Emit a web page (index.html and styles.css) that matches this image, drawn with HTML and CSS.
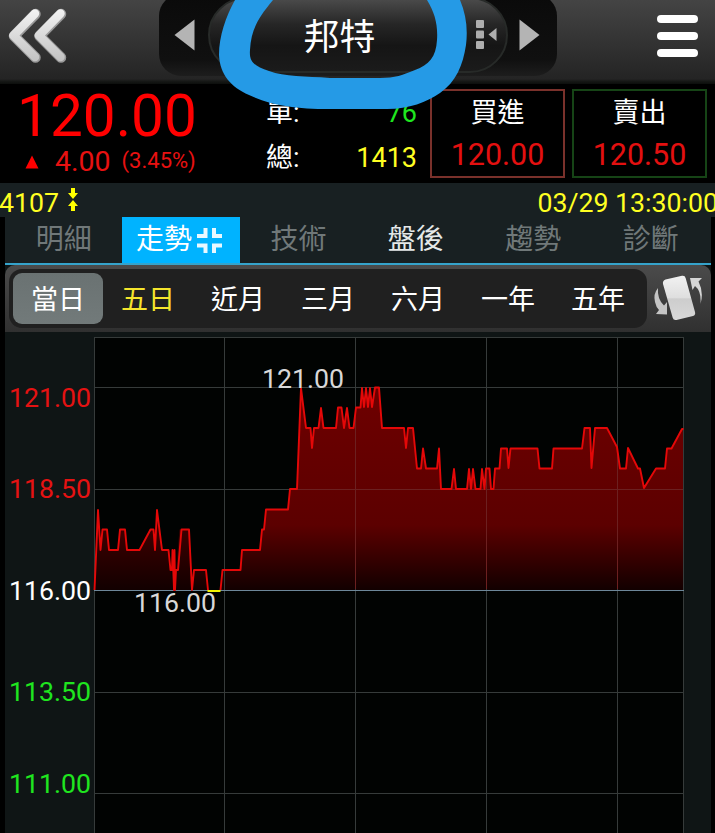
FILE: index.html
```html
<!DOCTYPE html>
<html lang="zh-Hant">
<head>
    <meta charset="UTF-8">
    <meta name="viewport" content="width=device-width, initial-scale=1.0">
    <title>邦特 4107</title>
    <link rel="stylesheet" href="styles.css">
</head>
<body>
    <header class="top-bar">
        <svg class="back-icon" width="60" height="56" viewBox="0 0 60 56">
            <defs>
                <linearGradient id="silver" gradientUnits="userSpaceOnUse" x1="0" y1="0" x2="0" y2="56">
                    <stop offset="0" stop-color="#f4f4f4"/>
                    <stop offset="1" stop-color="#c0c0c0"/>
                </linearGradient>
            </defs>
            <g fill="none" stroke-width="10.500" stroke-linecap="round" stroke-linejoin="round">
                <path stroke="#999" d="M27.500 6L6 28l21.500 21.500M53 6L31.500 28L53 49.500"/>
                <path stroke="url(#silver)" stroke-width="8.500" d="M27 5.500L5.500 27.500l21.500 21.500M52.500 5.500L31 27.500l21.500 21.500"/>
            </g>
        </svg>

        <div class="switcher">
            <svg width="21" height="32" viewBox="0 0 21 32"><path d="M20.500 .5v31L.5 16z" fill="#b4b4b4"/></svg>
            <div class="stock-name">
                <span>邦特</span>
                <svg class="list-icon" width="21" height="30" viewBox="0 0 21 30" fill="#adadad">
                    <rect x="0" y="0" width="8" height="8" rx="1"/>
                    <rect x="0" y="10.500" width="8" height="8" rx="1"/>
                    <rect x="0" y="21" width="8" height="8" rx="1"/>
                    <path d="M20.500 8v13L12.500 14.500z"/>
                </svg>
            </div>
            <svg width="21" height="32" viewBox="0 0 21 32"><path d="M.5 .5v31L20.500 16z" fill="#b4b4b4"/></svg>
        </div>

        <div class="menu-icon"><i></i><i></i><i></i></div>
    </header>

    <section class="quote">
        <div class="price">
            <div class="last">120.00</div>
            <div class="change">
                <svg width="14" height="14" viewBox="0 0 14 14"><path d="M7 .5L13.500 13.500H.5z" fill="#f00"/></svg>
                <span class="diff">4.00</span>
                <span class="percent">(3.45%)</span>
            </div>
        </div>
        <div class="volume">
            <div class="volume-row"><span>單:</span><span class="green">76</span></div>
            <div class="volume-row"><span>總:</span><span class="yellow">1413</span></div>
        </div>
        <div class="offer buy">
            <span>買進</span>
            <span class="offer-price">120.00</span>
        </div>
        <div class="offer sell">
            <span>賣出</span>
            <span class="offer-price">120.50</span>
        </div>
    </section>

    <div class="info-bar">
        <span>4107</span>
        <svg width="10" height="24" viewBox="0 0 10 24" fill="#ff0">
            <path d="M3 0h4v5h3L5 11 0 5h3zM3 23h4v-5h3L5 12 0 18h3z"/>
        </svg>
        <span class="time">03/29 13:30:00</span>
    </div>

    <main class="panel">
        <nav class="tabs">
            <div class="tab">明細</div>
            <div class="tab active">走勢
                <svg width="25" height="25" viewBox="0 0 25 25" fill="none" stroke="#e8f8ff" stroke-width="4">
                    <path d="M8.500 0v8H0M17 0v8h8M0 17.500h8.500V25M25 17.500h-8V25"/>
                </svg>
            </div>
            <div class="tab">技術</div>
            <div class="tab enabled">盤後</div>
            <div class="tab">趨勢</div>
            <div class="tab">診斷</div>
        </nav>

        <div class="range-bar">
            <div class="ranges">
                <div class="range selected">當日</div>
                <div class="range yellow">五日</div>
                <div class="range">近月</div>
                <div class="range">三月</div>
                <div class="range">六月</div>
                <div class="range">一年</div>
                <div class="range">五年</div>
            </div>
            <svg class="rotate-icon" width="50" height="48" viewBox="0 0 50 48">
                <defs>
                    <linearGradient id="card" x1="0" y1="0" x2="0" y2="1">
                        <stop offset="0" stop-color="#f2f2f2"/>
                        <stop offset=".5" stop-color="#dedede"/>
                        <stop offset=".52" stop-color="#cdcdcd"/>
                        <stop offset="1" stop-color="#d8d8d8"/>
                    </linearGradient>
                </defs>
                <path d="M12.500 4.500L29 .8q3-.5 3.700 2.400L42 37q.8 3-2 4l-16.500 4q-3 .6-3.800-2.300L10 9q-.6-3.500 2.500-4.500z" fill="url(#card)"/>
                <path d="M5 13Q0 19 2 27q1 5 4 8l-3 4 11 .5V27l-3 3.500Q4 24 5 13z" fill="#c4c4c4"/>
                <path d="M37 3h12l-3.500 3.500Q51 17 47.500 29q1-13-5.500-18l-2.500 4z" fill="#d6d6d6"/>
            </svg>
        </div>

        <svg class="chart" width="706" height="501" viewBox="5 332 706 501">
            <defs>
                <linearGradient id="area" gradientUnits="userSpaceOnUse" x1="0" y1="387" x2="0" y2="590">
                    <stop offset="0" stop-color="#6e0000"/>
                    <stop offset=".68" stop-color="#5c0000"/>
                    <stop offset="1" stop-color="#120000"/>
                </linearGradient>
                <linearGradient id="area-left" gradientUnits="userSpaceOnUse" x1="0" y1="509" x2="0" y2="590">
                    <stop offset="0" stop-color="#4c0000"/>
                    <stop offset="1" stop-color="#120000"/>
                </linearGradient>
            </defs>
            <rect x="94" y="337" width="590" height="496" fill="#010302"/>

            <!-- filled area under the price line -->
            <path fill="url(#area-left)" d="M94.500 590L98 510l2.500 40 2-20.500h4.500l2 20.500h9l2-20.500h5l2 20.500h12.500l11-20.500h3l1.500 20.500 2-40 5 40h7l2 20 2 20 3-20 3.500-40.500H189l3 60.500z"/>
            <path fill="url(#area)" d="M192 590l2-20h12l2 20h12.500l2-20h18l1.500-20h18l2-20.500h2l2-20h22l2-20.500h7L301 388l5 40h4.500l1.500 20 2-20h4.500l2.500-20 2.500 20H336l2-20.500h3.500L344 428l3-20 2.500 20h4l2.500-20.500h4.500L362 388l2 19 2-19 2 19 2-19 2 19 3-19.500h4L382 428h22l2 20 2-20h5l4 40.500h4l2-20 3 20h11l2-20 2 40.500h10.500l2.500-20 2 20h11l2-20 2 20 2-20 2.500 20h5l1.500-20 2.500 20 1.500-20.500h3.500l1.500 20.500h2.500l1.500-20.500h4.500l1.500-20h6l1.500 19.500 2-19.500h27l2 20H552l1.500-20H582l2.500-20.500h5.500l1.500 40 3.500-40h12l10 19 3 21.500h6l2-20.500 10 20.500h2l4 19.500 12-19.500h9l2-20h4.500L682 429h1.500v161z"/>

            <g stroke="#363b3a">
                <path d="M94.500 337v496M224.500 337v496M355.500 337v496M486.500 337v496M617.500 337v496M683.500 337v496M94 337.500h590M94 387.500h590M94 692.500h590M94 793.500h590" fill="none"/>
                <path d="M94 489.500h201"/>
            </g>
            <g stroke="#6c2020" fill="none">
                <path d="M355.500 410v179M486.500 470v119M617.500 449v140"/>
                <path d="M297 489.500h386"/>
            </g>
            <path d="M94 590.500h590" stroke="#6d8799" fill="none"/>

            <path fill="none" stroke="#e40808" stroke-width="1.900" stroke-linejoin="round" d="M94.500 590L98 510l2.500 40 2-20.500h4.500l2 20.500h9l2-20.500h5l2 20.500h12.500l11-20.500h3l1.500 20.500 2-40 5 40h6.500l2 20h1.500l.5-20 1.500 40 .5-40 .5 40 1-20h2l3.500-40.500H189l3 60.500 2-20h12l2 20M220.500 590l2-20h18l1.500-20h18l2-20.500h2l2-20h22l2-20.500h7L301 388l5 40h4.500l1.500 20 2-20h4.500l2.500-20 2.500 20H336l2-20.500h3.500L344 428l3-20 2.500 20h4l2.500-20.500h4.500L362 388l2 19 2-19 2 19 2-19 2 19 3-19.500h4L382 428h22l2 20 2-20h5l4 40.500h4l2-20 3 20h11l2-20 2 40.500h10.500l2.500-20 2 20h11l2-20 2 20 2-20 2.500 20h5l1.500-20 2.500 20 1.500-20.500h3.500l1.500 20.500h2.500l1.500-20.500h4.500l1.500-20h6l1.500 19.500 2-19.500h27l2 20H552l1.500-20H582l2.500-20.500h5.500l1.500 40 3.500-40h12l10 19 3 21.500h6l2-20.500 10 20.500h2l4 19.500 12-19.500h9l2-20h4.500L682 429h1.500"/>
            <path d="M207.500 591H220.500" stroke="#f2f200" stroke-width="2"/>

            <g class="axis" text-anchor="end">
                <text class="up" x="91" y="407">121.00</text>
                <text class="up" x="91" y="498">118.50</text>
                <text class="flat" x="91" y="600">116.00</text>
                <text class="down" x="91" y="701">113.50</text>
                <text class="down" x="91" y="793">111.00</text>
            </g>
            <g class="axis mark">
                <text x="262" y="388">121.00</text>
                <text x="134" y="612">116.00</text>
            </g>
        </svg>
    </main>

    <!-- hand-drawn highlight around the stock name -->
    <svg class="highlight" width="260" height="112" viewBox="215 0 260 112">
        <path fill="#259ae6" d="M235 0C226 16 219 36 219 55c1 20 12 32 30 40 22 10 45 14 81 14h57c22 0 40-7 53-16 16-11 23-28 26-48 2-16 0-31-6-45h-33c8 13 11 25 10 40-1 17-8 25-22 30-12 5-20 8-35 8h-50c-25-2-45-1-61-7-15-5-20-9-19-21 1-20 8-32 23-50z"/>
    </svg>
</body>
</html>
```

FILE: styles.css
```css
* {
    box-sizing: border-box;
}

body {
    margin: 0;
    height: 833px;
    overflow: hidden;
    background-color: #000;
    color: #fff;
    font-family: Roboto, "Noto Sans CJK TC", sans-serif;
    font-size: 27px;
    position: relative;
}

.green {
    color: #1fe61f;
}

.yellow {
    color: #ff2;
}

/* top bar */
.top-bar {
    display: flex;
    justify-content: space-between;
    height: 84px;
    padding: 0 17px 0 8px;
    overflow: hidden;
    background: linear-gradient(#444, #242424 94%, #151715 97%, #0c0e0c);
}

.back-icon {
    margin-top: 8px;
}

.switcher {
    display: flex;
    align-items: center;
    justify-content: space-between;
    width: 398px;
    height: 82px;
    margin-top: -6px;
    margin-left: 74px;
    margin-right: 83px;
    padding: 0 17px 0 15px;
    border-radius: 22px;
    background: linear-gradient(#0a0a0a, #101010 80%, #1d1d1d);
}

.stock-name {
    display: flex;
    align-items: center;
    justify-content: flex-end;
    width: 300px;
    height: 76px;
    margin: 0 0 0 1px;
    padding-right: 9px;
    border-radius: 38px;
    border: 2px solid #272a28;
    background: linear-gradient(#4b4b4b, #262626 35%, #151515 65%, #1b1b1b);
    font-size: 36px;
}

.stock-name span {
    margin: -2px 100px 0 0;
}

.menu-icon {
    display: flex;
    flex-direction: column;
    gap: 9px;
    padding-top: 15px;
}

.menu-icon i {
    width: 41px;
    height: 8px;
    border-radius: 4px;
    background-color: #fff;
}

/* quote */
.quote {
    display: flex;
    height: 99px;
    padding-right: 8px;
    line-height: 1;
}

.price {
    width: 266px;
    color: #f00;
}

.last {
    padding: 7px 0 5px 17px;
    font-size: 58.5px;
    line-height: 50px;
}

.change {
    display: flex;
    align-items: center;
    height: 32px;
    padding-left: 25px;
    color: #e81111;
}

.diff {
    margin-left: 16px;
    font-size: 28.5px;
    line-height: 26px;
}

.percent {
    margin: -2px 0 0 11px;
    font-size: 22px;
}

.volume {
    width: 151px;
    padding-top: 7px;
}

.volume-row {
    display: flex;
    align-items: center;
    justify-content: space-between;
    height: 45px;
}

.offer {
    display: flex;
    flex-direction: column;
    align-items: center;
    width: 135px;
    height: 89px;
    margin: 5px 0 0 13px;
    padding-top: 9px;
    border: 2px solid #7a312b;
}

.offer.sell {
    margin-left: 7px;
    border-color: #164416;
}

.offer-price {
    margin-top: 13px;
    color: #e31010;
    font-size: 30.5px;
}

/* code and time */
.info-bar {
    display: flex;
    align-items: center;
    height: 34px;
    margin-left: -1px;
    margin-right: -3px;
    padding-top: 6px;
    background-color: #182022;
    color: #ff2;
    font-size: 26.7px;
    white-space: nowrap;
}

.info-bar svg {
    margin: -6px 0 0 9px;
}

.time {
    margin-left: auto;
}

/* tabs */
.panel {
    width: 706px;
    margin-left: 5px;
    background-color: #0f1515;
}

.tabs {
    display: flex;
    height: 48px;
    border-bottom: 2px solid #35a3cb;
    background-color: #182022;
}

.tab {
    display: flex;
    align-items: center;
    justify-content: center;
    width: 117.4px;
    padding-bottom: 1px;
    color: #707879;
    font-size: 28px;
    line-height: 1;
}

.tab svg {
    margin: 1px 0 0 5px;
}

.tab.active {
    padding-right: 4px;
    background-color: #00b3ff;
    color: #fff;
}

.tab.enabled {
    color: #e4e8e8;
}

/* range buttons */
.range-bar {
    display: flex;
    height: 67px;
    padding: 4px 4px 4px;
    border-radius: 10px 10px 0 0;
    background: linear-gradient(#4b4b4b, #303030);
}

.ranges {
    display: flex;
    width: 638px;
    height: 59px;
    padding: 4px;
    border-radius: 13px;
    background-color: #202020;
}

.range {
    display: flex;
    align-items: center;
    justify-content: center;
    width: 90px;
    height: 51px;
    padding-top: 3px;
    border-radius: 9px;
    line-height: 1;
}

.range.selected {
    background: linear-gradient(#6a7272, #727a7a);
}

.range.yellow {
    color: #f5e52c;
}

.rotate-icon {
    margin: 6px 0 0 6px;
}

/* chart */
.chart {
    display: block;
}

.axis {
    font-size: 26.7px;
}

.up {
    fill: #e51212;
}

.flat {
    fill: #fff;
}

.down {
    fill: #1fe61f;
}

.mark {
    fill: #d8d8d8;
}

.highlight {
    position: absolute;
    top: 0;
    left: 215px;
}
```
